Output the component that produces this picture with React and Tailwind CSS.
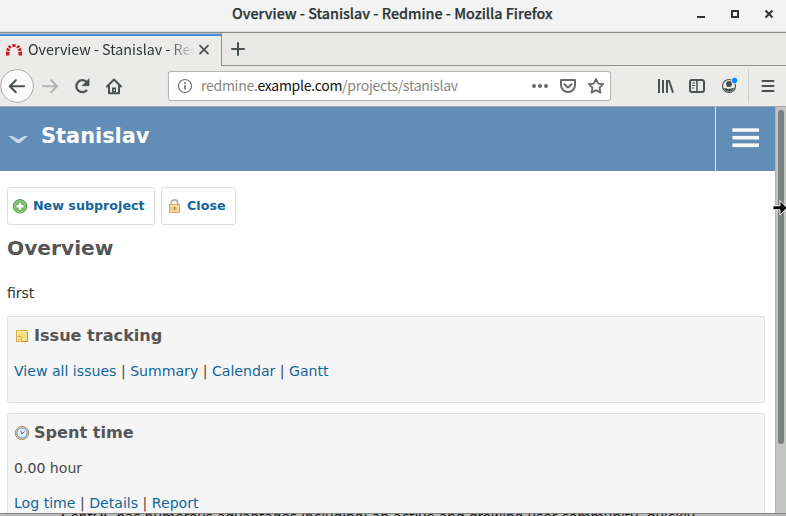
import React from "react";

const uiFont = "font-['Noto_Sans_CJK_SC','Noto_Sans',sans-serif]";

function TitleBar() {
  return (
    <div className="flex h-8 shrink-0 items-center border-b border-[#dcdcdb] bg-[#f3f3f3]">
      <div className="w-[232px] shrink-0" />
      <div className="mb-[5px] w-[440px] whitespace-nowrap text-[14.3px] leading-6 font-medium text-[#2e3436] [-webkit-text-stroke:0.25px_#2e3436]">
        Overview - Stanislav - Redmine - Mozilla Firefox
      </div>
      <svg className="h-8 w-[114px]" viewBox="672 0 114 32" fill="none" stroke="#2e3436">
        <path d="M697 17h8" strokeWidth="2" />
        <rect x="732" y="11" width="6" height="6" strokeWidth="2" />
        <path d="M765.5 10.5l7 7M772.5 10.5l-7 7" strokeWidth="2" />
      </svg>
    </div>
  );
}

function TabStrip() {
  return (
    <div className="flex h-[34px] shrink-0 border-t border-[#8b8d89] bg-[#e8e8e6]">
      <div className="flex w-[221px] shrink-0 border-t border-[#b5bfc8] bg-[#ebebea]">
        <div className="flex h-full w-full items-center border-t-2 border-[#4a90d9] pb-[3px]">
          <svg className="ml-1.5 h-4 w-4 shrink-0" viewBox="0 0 16 16" fill="#c8191b">
            <path d="M0 9.5l3.6.5-.2 3.5H0zM1 5.8l3.1 1.4-.7 2-3.1-.7zM3.3 3L5.8 5.3 4.5 6.6 1.7 4.7zM6.2 2.2h3.6l-.3 2.7h-3z" />
            <path d="M16 9.5l-3.6.5.2 3.5H16zM15 5.8l-3.1 1.4.7 2 3.1-.7zM12.7 3l-2.5 2.3 1.3 1.3 2.8-1.9z" />
          </svg>
          <div className="mb-0.5 ml-1.5 w-[166px] overflow-hidden whitespace-nowrap text-[14.3px] leading-6 text-[#2e3436] [mask-image:linear-gradient(to_right,black_84%,transparent_100%)]">
            Overview - Stanislav - Redmine
          </div>
          <svg className="ml-0.5 h-4 w-4 shrink-0" viewBox="0 0 16 16" fill="none" stroke="#4a5152" strokeWidth="1.8" strokeLinecap="round">
            <path d="M4 3.7l8 8M12 3.7l-8 8" />
          </svg>
        </div>
      </div>
      <div className="flex h-[33px] flex-1 items-center border-b border-l border-[#8f918d] pl-2">
        <svg className="h-4 w-4" viewBox="0 0 16 16" stroke="#4a5152" strokeWidth="2" strokeLinecap="round">
          <path d="M8 2v12M2 8h12" />
        </svg>
      </div>
    </div>
  );
}

function NavBar() {
  return (
    <div className="flex h-[41px] shrink-0 items-center border-b border-[#aaa9a4] bg-[#ebebea]">
      <svg className="h-10 w-[168px] shrink-0" viewBox="0 66 168 40" fill="none" stroke="#4a5152" strokeWidth="2" strokeLinecap="round" strokeLinejoin="round">
        <circle cx="17" cy="86" r="16.4" fill="#fbfbfb" stroke="#aaaba9" strokeWidth="1" />
        <path d="M24 86.3H10M15.8 80.3l-6 6 6 6" />
        <path d="M43 86.3h14M51.2 80.3l6 6-6 6" stroke="#b3b5b4" />
        <path d="M86.8 82.2A6 6 0 1 0 87 90" strokeLinecap="butt" strokeWidth="2.2" />
        <path d="M89 79v6.7h-6.5z" fill="#4a5152" stroke="#4a5152" strokeWidth=".8" />
        <path d="M107 86.5l7-7 7 7" />
        <path d="M109 86v7.2h10V86" />
        <path d="M114 87.5v5" strokeWidth="4" strokeLinecap="butt" />
        <path d="M114.3 89.5v1.5" stroke="#ebebea" strokeWidth="1.2" strokeLinecap="butt" />
      </svg>
      <div className="flex h-[30px] w-[443px] shrink-0 items-center rounded-[3px] border border-[#b5b6b4] bg-white shadow-[0_0_1px_#bbb]">
        <svg className="ml-2 h-4 w-4 shrink-0" viewBox="0 0 16 16" fill="none" stroke="#737373">
          <circle cx="8" cy="8" r="6.5" strokeWidth="1.2" />
          <path d="M8 7.2v4.2M8 4.2v1.7" strokeWidth="1.7" />
        </svg>
        <div className="mb-px ml-2 w-[322px] shrink-0 whitespace-nowrap text-[14px] leading-[27px] tracking-[-0.27px] text-[#858585]">
          redmine.<span className="text-[#111]">example.com</span>/projects/stanislav
        </div>
        <svg className="h-7 w-[86px] shrink-0" viewBox="523 72 86 28" fill="none" stroke="#686869" strokeWidth="2" strokeLinejoin="round">
          <g fill="#686869" stroke="none">
            <circle cx="534" cy="86" r="2" />
            <circle cx="540" cy="86" r="2" />
            <circle cx="546" cy="86" r="2" />
          </g>
          <path d="M561 80h14v5a7 7 0 0 1-14 0z" />
          <path d="M564.5 84.2l3.5 3.4 3.5-3.4" strokeLinecap="round" />
          <path d="M596 79l2.2 4.6 5 .6-3.7 3.4 1 5-4.5-2.5-4.5 2.5 1-5-3.7-3.4 5-.6z" strokeWidth="1.8" />
        </svg>
      </div>
      <svg className="h-10 w-[175px] shrink-0" viewBox="611 66 175 40" fill="none" stroke="#4a5152" strokeWidth="2">
        <path d="M659 79v14M663 80v13M667 80v13" />
        <path d="M668.8 80l4.2 12.8" />
        <rect x="690" y="80" width="14" height="12" rx="2" />
        <path d="M697 80v12" strokeWidth="1.5" />
        <path d="M692 83h3.2M692 85.5h3.2M692 88h2.2" strokeWidth="1" />
        <circle cx="729" cy="86" r="6.5" strokeWidth="1.2" />
        <circle cx="729" cy="84" r="3" fill="#4a5152" stroke="none" />
        <path d="M724 88c2 0 3 .8 5 .8s3-.8 5-.8c-.8 2.4-2.8 3.7-5 3.7s-4.2-1.3-5-3.7z" fill="#4a5152" stroke="none" />
        <circle cx="734.5" cy="80.5" r="3.3" fill="#ebebea" stroke="none" />
        <circle cx="734.5" cy="80.5" r="2.7" fill="#0a84ff" stroke="none" />
        <path d="M748.5 69v34" stroke="#cececc" strokeWidth="1" />
        <path d="M762.5 81h11M762.5 86h11M762.5 91h11" strokeLinecap="round" />
      </svg>
    </div>
  );
}

function ProjectHeader() {
  return (
    <header className="flex h-16 shrink-0 bg-[#628db6]">
      <svg className="mt-6 ml-[7px] h-[18px] w-6 shrink-0" viewBox="7 131 24 18">
        <path d="M8.5 136h3.8l6 3.4 6-3.4h3.7l-7.4 6.5c-1 .8-3.4.8-4.4 0z" fill="#c7d6e5" />
      </svg>
      <div className="mt-px ml-[10px] flex-1 text-[20.9px] leading-[57px] font-bold text-white">Stanislav</div>
      <div className="w-[60px] shrink-0 border-l border-[#dce5ee] pt-5 pl-4">
        <svg className="h-6 w-7" viewBox="732 127 28 24" fill="#f8f8f8">
          <rect x="732.4" y="128.3" width="26.6" height="3.5" />
          <rect x="732.4" y="135.9" width="26.6" height="3.6" />
          <rect x="732.4" y="143.4" width="26.6" height="3.7" />
        </svg>
      </div>
    </header>
  );
}

function AddIcon() {
  return (
    <svg className="h-4 w-4" viewBox="0 0 16 16">
      <circle cx="8" cy="8.3" r="6.7" fill="#72b862" stroke="#479142" strokeWidth="1" />
      <circle cx="8" cy="8.3" r="5.7" fill="none" stroke="#a9d69b" strokeWidth=".8" />
      <path d="M8 4.8v7M4.5 8.3h7" stroke="#fff" strokeWidth="2.4" />
    </svg>
  );
}

function LockIcon() {
  return (
    <svg className="h-4 w-4" viewBox="0 0 16 16" fill="none">
      <path d="M4.4 7V4.3c0-3.2 6.2-3.2 6.2 0V7" stroke="#b2b2ae" strokeWidth="1.8" />
      <rect x="2.5" y="6.5" width="10" height="8" fill="#efcf85" stroke="#dcae62" />
      <path d="M3.5 8h8M3.5 13h8" stroke="#f8e6b7" />
      <path d="M7.5 9v3" stroke="#8a6b34" strokeWidth="1.2" />
    </svg>
  );
}

function NoteIcon() {
  return (
    <svg className="h-4 w-4 shrink-0" viewBox="0 0 16 16" fill="none">
      <path d="M2.5 2.5h11v11h-11z" fill="#f5df80" stroke="#e3ab45" />
      <path d="M3.5 8V3.5h9" stroke="#fdf2b8" />
      <path d="M7 13.5h6.5V4" stroke="#d68a2f" />
      <path d="M2.5 8.5h4.9v5H2.5z" fill="#f7e9b5" stroke="#e0a850" />
      <path d="M4 12.5l2-2" stroke="#d28b30" />
    </svg>
  );
}

function ClockIcon() {
  return (
    <svg className="h-4 w-4 shrink-0" viewBox="0 0 16 16" fill="none">
      <circle cx="8" cy="8" r="6.7" fill="#f3e3bd" stroke="#b6914f" />
      <circle cx="8" cy="8" r="5.2" fill="#e9f1fb" stroke="#719ed6" strokeWidth="1.2" />
      <path d="M6.8 5.8L7.8 8.8l2.8-2.3" stroke="#5a6064" strokeWidth="1" />
    </svg>
  );
}

function Links({ items }) {
  return (
    <p className="whitespace-pre text-[14.1px] leading-5 text-[#484848]">
      {items.map((item, i) => (
        <React.Fragment key={item}>
          {i > 0 && " | "}
          <a className="text-[#169] no-underline">{item}</a>
        </React.Fragment>
      ))}
    </p>
  );
}

function Page() {
  return (
    <main className="flex min-w-0 flex-1 flex-col overflow-hidden bg-white font-['DejaVu_Sans',Verdana,sans-serif]">
      <ProjectHeader />
      <div className="mt-4 flex h-[38px] shrink-0 gap-1.5 pl-[7px] text-[12.7px] font-bold text-[#169]">
        <a className="flex w-[148px] items-center gap-[5px] rounded-[3px] border border-[#dcdcdc] pl-1 whitespace-nowrap">
          <AddIcon />
          New subproject
        </a>
        <a className="flex w-[75px] items-center gap-1 rounded-[3px] border border-[#dcdcdc] pl-[5px]">
          <LockIcon />
          Close
        </a>
      </div>
      <h2 className="mt-[10px] ml-[7px] text-[20.2px] leading-[26px] font-bold text-[#555]">Overview</h2>
      <p className="mt-[22px] ml-[7px] text-[14px] leading-5 text-[#333]">first</p>
      <section className="mt-[13px] mr-[10px] ml-[7px] h-[87px] shrink-0 rounded-[2px] border border-[#e0e2e3] bg-[#f5f5f5] px-1.5">
        <h3 className="mt-[9px] mb-[15px] flex items-center gap-1 text-[16.1px] leading-5 font-bold text-[#555]">
          <NoteIcon />
          Issue tracking
        </h3>
        <Links items={["View all issues", "Summary", "Calendar", "Gantt"]} />
      </section>
      <section className="mt-[10px] mr-[10px] ml-[7px] h-[120px] shrink-0 rounded-[2px] border border-[#e0e2e3] bg-[#f5f5f5] px-1.5">
        <h3 className="mt-[9px] mb-[15px] flex items-center gap-1 text-[16.1px] leading-5 font-bold text-[#555]">
          <ClockIcon />
          Spent time
        </h3>
        <p className="mb-[15px] text-[14.1px] leading-5 text-[#484848]">0.00 hour</p>
        <Links items={["Log time", "Details", "Report"]} />
      </section>
    </main>
  );
}

function Scrollbar() {
  return (
    <div className="relative w-[11px] shrink-0 border-l border-[#b3b5b2] bg-[#c4c6c4]">
      <div className="mt-[3px] ml-0.5 h-[334px] w-1.5 rounded-full bg-[#7b807f]" />
      <svg className="absolute top-[92px] -left-[5px] h-[18px] w-4" viewBox="771 199 16 18">
        <path d="M773 205.8h7v-5.3l7 7.3-7 7.3v-5.3h-7z" fill="#000" stroke="#fff" strokeWidth="1" />
      </svg>
    </div>
  );
}

export default function App() {
  return (
    <div className={`flex h-[516px] w-[786px] flex-col overflow-hidden bg-[#b9b9b9] ${uiFont}`}>
      <TitleBar />
      <TabStrip />
      <NavBar />
      <div className="flex h-[406px] shrink-0 overflow-hidden">
        <Page />
        <Scrollbar />
      </div>
      <div className="flex h-[3px] shrink-0 overflow-hidden border-t border-[#858585] pl-[61px] font-['DejaVu_Sans',sans-serif] text-[13.6px] leading-4 whitespace-nowrap text-[#111]">
        <span className="-mt-[5px]">CentOS has numerous advantages including: an active and growing user community, quickly</span>
      </div>
    </div>
  );
}
